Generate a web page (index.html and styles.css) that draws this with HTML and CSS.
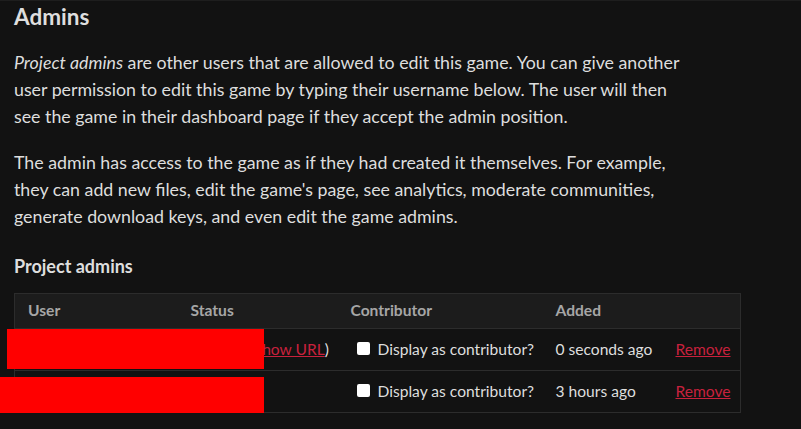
FILE: index.html
```html
<!DOCTYPE html>
<html lang="en">
<head>
  <meta charset="UTF-8" />
  <title>Admins</title>
  <link rel="stylesheet" href="styles.css">
</head>
<body>

  <div class="page">
    <h2>Admins</h2>

    <p><em>Project admins</em> are other users that are allowed to edit this game. You can give another
      user permission to edit this game by typing their username below. The user will then
      see the game in their dashboard page if they accept the admin position.</p>

    <p>The admin has access to the game as if they had created it themselves. For example,
      they can add new files, edit the game's page, see analytics, moderate communities,
      generate download keys, and even edit the game admins.</p>

    <h3>Project admins</h3>

    <div class="table-wrap">
      <table class="admins">
        <colgroup>
          <col class="c-user">
          <col class="c-status">
          <col class="c-contrib">
          <col class="c-added">
          <col>
        </colgroup>
        <thead>
          <tr>
            <th>User</th>
            <th>Status</th>
            <th>Contributor</th>
            <th>Added</th>
            <th></th>
          </tr>
        </thead>
        <tbody>
          <tr>
            <td><span class="name">someone</span></td>
            <td>Pending (<a href="#">Show URL</a>)</td>
            <td><label class="check"><span class="box"></span>Display as contributor?</label></td>
            <td>0 seconds ago</td>
            <td><a href="#">Remove</a></td>
          </tr>
          <tr>
            <td class="user-top"><span class="avatar"></span></td>
            <td></td>
            <td><label class="check"><span class="box"></span>Display as contributor?</label></td>
            <td>3 hours ago</td>
            <td><a href="#">Remove</a></td>
          </tr>
        </tbody>
      </table>

      <!-- redaction boxes over the user column -->
      <div class="redact redact-1"></div>
      <div class="redact redact-2"></div>
    </div>
  </div>

</body>
</html>
```

FILE: styles.css
```css
body {
  margin: 0;
  background-color: #121212;
  color: #dedede;
  font-family: Lato, "Open Sans", sans-serif;
  font-size: 17.8px;
}

.page {
  padding: 2px 14px 0 14px;
  border-top: 1px solid #1e1e1e;
}

h2 {
  font-size: 22.5px;
  font-weight: bold;
  margin: 0 0 18px 0;
  line-height: 28px;
}

p {
  max-width: 676px;
  margin: 0 0 19px 0;
  line-height: 27px;
}

h3 {
  font-size: 18px;
  font-weight: bold;
  margin: 24px 0 15px 0;
  line-height: 24px;
}

.table-wrap {
  position: relative;
  width: 727px;
}

.admins {
  width: 727px;
  border-collapse: collapse;
  table-layout: fixed;
  font-size: 15.6px;
  border: 1px solid #2c2c2c;
}

.c-user { width: 163px; }
.c-status { width: 160px; }
.c-contrib { width: 205px; }
.c-added { width: 120px; }

.admins th {
  background-color: #1c1c1c;
  color: #a6a6a6;
  font-weight: bold;
  text-align: left;
  height: 32px;
  padding: 0 13px 2px 13px;
}

.admins td {
  height: 39px;
  padding: 0 13px 2px 13px;
  border-top: 1px solid #2c2c2c;
  white-space: nowrap;
}

.admins td.user-top {
  vertical-align: top;
}

.admins a {
  color: #c8213d;
  text-decoration: underline;
}

.avatar {
  display: block;
  width: 28px;
  height: 10px;
  margin-top: 6px;
  background-color: #4a4a4a;
}

.check {
  display: flex;
  align-items: center;
  gap: 8px;
  margin-left: 6px;
}

.box {
  flex-shrink: 0;
  width: 13px;
  height: 13px;
  background-color: #fff;
  border-radius: 2px;
}

.redact {
  position: absolute;
  background-color: #ff0000;
}

.redact-1 {
  left: -7px;
  top: 36px;
  width: 257px;
  height: 40px;
}

.redact-2 {
  left: -14px;
  top: 84px;
  width: 264px;
  height: 42px;
}
```
